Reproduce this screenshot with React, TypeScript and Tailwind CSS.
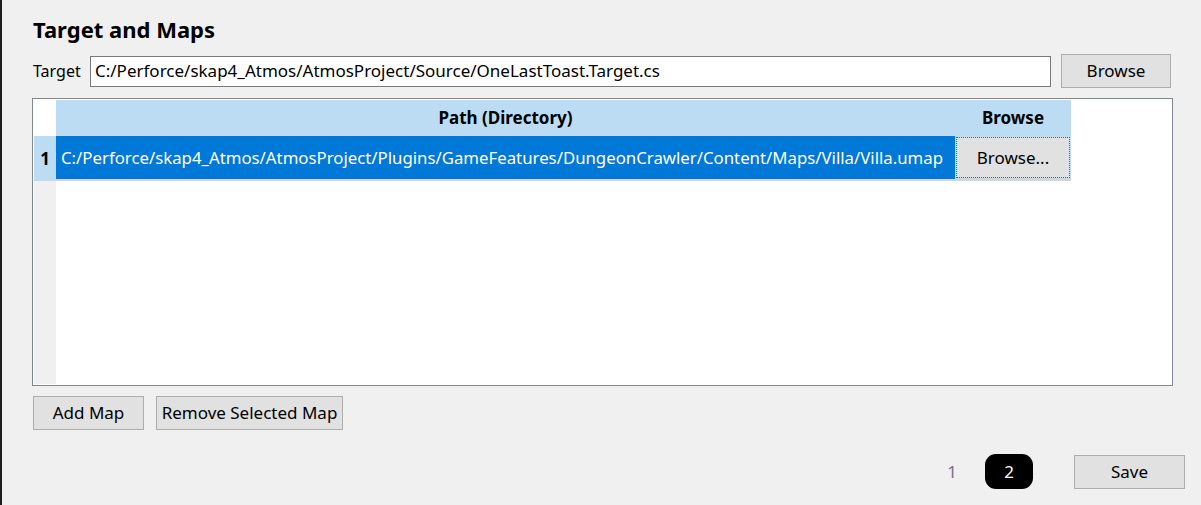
import React from 'react';

const font = { fontFamily: '"Segoe UI", "Noto Sans", sans-serif' };

const WinButton = ({ label, className }: { label: string; className: string }) => (
  <button
    className={`flex items-center justify-center bg-[#e1e1e1] border border-[#adadad] text-[17px] text-black ${className}`}
  >
    {label}
  </button>
);

const App: React.FC = () => {
  const path =
    'C:/Perforce/skap4_Atmos/AtmosProject/Plugins/GameFeatures/DungeonCrawler/Content/Maps/Villa/Villa.umap';

  return (
    <div className="flex h-[505px] w-full overflow-hidden bg-[#f0f0f0] text-black" style={font}>
      {/* dark window edge */}
      <div className="w-[2px] shrink-0 bg-[#1e1e1e]" />

      <div className="flex flex-1 flex-col pl-[30px] pr-[16px]">
        <h2 className="ml-px mt-[14px] h-[30px] text-[22px] font-bold leading-[30px]">Target and Maps</h2>

        {/* target row */}
        <div className="ml-px mt-[10px] flex h-[34px] items-center">
          <span className="w-[57px] text-[16px]">Target</span>
          <div className="flex h-[31px] w-[961px] items-center border border-[#7a7a7a] bg-white pl-[4px] text-[17px]">
            C:/Perforce/skap4_Atmos/AtmosProject/Source/OneLastToast.Target.cs
          </div>
          <WinButton label="Browse" className="ml-[10px] h-[34px] w-[110px]" />
        </div>

        {/* maps grid */}
        <div className="mt-[10px] flex h-[288px] w-[1141px] flex-col border border-[#828790] bg-white p-px">
          <div className="flex h-[36px] shrink-0">
            <div className="w-[22px] bg-white" />
            <div className="flex w-[1015px] bg-[#bcdcf4] text-[17px] font-bold">
              <div className="flex w-[899px] items-center justify-center">Path (Directory)</div>
              <div className="flex w-[116px] items-center justify-center">Browse</div>
            </div>
          </div>
          <div className="flex h-[45px] shrink-0">
            <div className="flex w-[22px] items-center justify-center bg-[#bcdcf4] text-[17px] font-bold">1</div>
            <div className="flex border-b-2 border-[#d5d5d5]">
              <div className="flex w-[899px] items-center overflow-hidden whitespace-nowrap bg-[#0078d7] pl-[5px] text-[16.8px] text-white">
                {path}
              </div>
              <div className="w-[116px] bg-[#bcdcf4] p-px">
                <div className="flex h-full items-center justify-center border border-dotted border-[#0078d7] bg-[#e1e1e1] text-[17px]">
                  Browse...
                </div>
              </div>
            </div>
          </div>
          <div className="flex flex-1">
            <div className="w-[22px] bg-[#f0f0f0]" />
            <div className="flex-1 bg-white" />
          </div>
        </div>

        {/* add / remove */}
        <div className="ml-px mt-[10px] flex gap-[12px]">
          <WinButton label="Add Map" className="h-[34px] w-[111px]" />
          <WinButton label="Remove Selected Map" className="h-[34px] w-[187px]" />
        </div>

        {/* footer: pager + save */}
        <div className="mt-[24px] flex items-center justify-end">
          <span className="mr-[28px] text-[17px] text-[#71718a]">1</span>
          <span className="flex h-[35px] w-[48px] items-center justify-center rounded-[11px] bg-black text-[17px] text-white">
            2
          </span>
          <WinButton label="Save" className="ml-[41px] h-[34px] w-[111px]" />
        </div>
      </div>
    </div>
  );
};

export default App;
